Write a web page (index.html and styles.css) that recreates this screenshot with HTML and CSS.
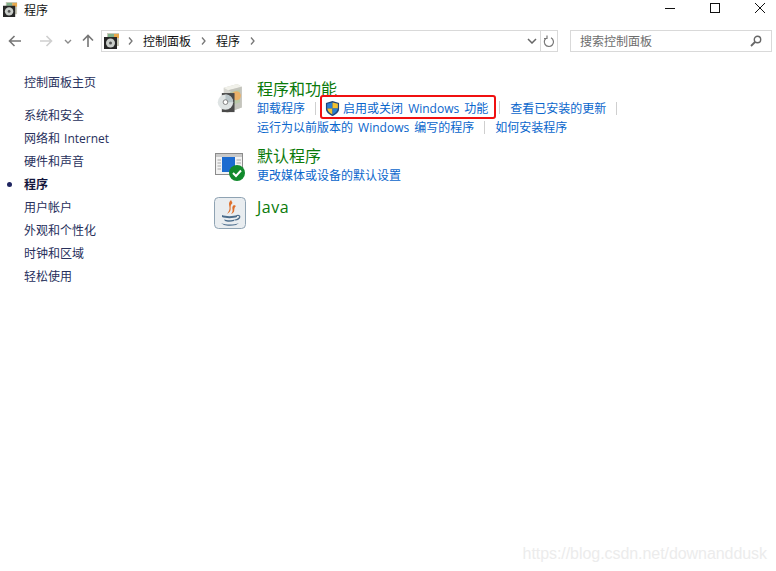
FILE: index.html
```html
<!DOCTYPE html>
<html lang="zh-CN">
<head>
    <meta charset="UTF-8">
    <title>程序</title>
    <link rel="stylesheet" href="styles.css">
</head>
<body>
    <svg class="icon-defs" width="0" height="0">
        <defs>
            <symbol id="disc-small" viewBox="0 0 16 16">
                <rect x="3" y="0" width="12" height="13" fill="#c8c8b8"/>
                <rect x="4" y="1" width="6" height="3" fill="#7fb08a"/>
                <rect x="10" y="1" width="5" height="4" fill="#e8a84c"/>
                <rect x="0" y="4" width="13" height="12" fill="#262626"/>
                <circle cx="6.500" cy="10" r="4.500" fill="#c9cdc9"/>
                <circle cx="6.500" cy="10" r="1.500" fill="#555"/>
            </symbol>
        </defs>
    </svg>

    <div class="titlebar">
        <div class="title">
            <svg class="title-icon"><use href="#disc-small"/></svg>
            <span>程序</span>
        </div>
        <div class="window-btns">
            <svg width="10" height="10" viewBox="0 0 10 10"><path d="M0 5.500H10" stroke="#111" fill="none"/></svg>
            <svg width="10" height="10" viewBox="0 0 10 10"><rect x="0.500" y="0.500" width="9" height="9" stroke="#111" fill="none"/></svg>
            <svg width="10" height="10" viewBox="0 0 10 10"><path d="M0 0L10 10M10 0L0 10" stroke="#111" fill="none"/></svg>
        </div>
    </div>

    <div class="navbar">
        <div class="nav-btns">
            <svg width="14" height="12" viewBox="0 0 14 12"><path d="M13 6H1.500M6.500 1L1.500 6L6.500 11" stroke="#767676" stroke-width="1.600" fill="none"/></svg>
            <svg class="nav-forward" width="14" height="12" viewBox="0 0 14 12"><path d="M1 6H12.500M7.500 1L12.500 6L7.500 11" stroke="#cfcfcf" stroke-width="1.600" fill="none"/></svg>
            <svg class="nav-drop" width="8" height="5" viewBox="0 0 8 5"><path d="M1 1L4 4L7 1" stroke="#8a8a8a" stroke-width="1.400" fill="none"/></svg>
            <svg class="nav-up" width="12" height="14" viewBox="0 0 12 14"><path d="M6 13V1.500M1 6.500L6 1.500L11 6.500" stroke="#767676" stroke-width="1.600" fill="none"/></svg>
        </div>
        <div class="address">
            <svg class="address-icon"><use href="#disc-small"/></svg>
            <svg class="crumb-arrow" width="5" height="8" viewBox="0 0 5 8"><path d="M1 0.500L4 4L1 7.500" stroke="#777" stroke-width="1.300" fill="none"/></svg>
            <span class="crumb">控制面板</span>
            <svg class="crumb-arrow" width="5" height="8" viewBox="0 0 5 8"><path d="M1 0.500L4 4L1 7.500" stroke="#777" stroke-width="1.300" fill="none"/></svg>
            <span class="crumb">程序</span>
            <svg class="crumb-arrow" width="5" height="8" viewBox="0 0 5 8"><path d="M1 0.500L4 4L1 7.500" stroke="#777" stroke-width="1.300" fill="none"/></svg>
            <svg class="address-drop" width="10" height="6" viewBox="0 0 10 6"><path d="M1 1L5 5L9 1" stroke="#666" stroke-width="1.500" fill="none"/></svg>
            <div class="refresh">
                <svg width="12" height="13" viewBox="0 0 12 13"><path d="M4.500 2.500A4.600 4.600 0 1 0 8 2.800M4 0.500V3.500H1" stroke="#777" stroke-width="1.200" fill="none"/></svg>
            </div>
        </div>
        <div class="search">
            <span>搜索控制面板</span>
            <svg width="12" height="12" viewBox="0 0 12 12"><circle cx="7.500" cy="4.500" r="3.200" stroke="#666" stroke-width="1.400" fill="none"/><path d="M5 7L1 11" stroke="#666" stroke-width="1.800"/></svg>
        </div>
    </div>

    <div class="main">
        <ul class="sidebar">
            <li class="side-home">控制面板主页</li>
            <li>系统和安全</li>
            <li>网络和 Internet</li>
            <li>硬件和声音</li>
            <li class="side-current">程序</li>
            <li>用户帐户</li>
            <li>外观和个性化</li>
            <li>时钟和区域</li>
            <li>轻松使用</li>
        </ul>

        <div class="content">
            <div class="category">
                <svg class="cat-icon icon-programs" viewBox="0 0 32 32">
                    <path d="M9 4L24 0L29 3V26L13 32L9 30Z" fill="#d6d6d0"/>
                    <path d="M9 4L24 0L29 3L14 7Z" fill="#f1f1ea"/>
                    <path d="M14 7L29 3V26L20 29V10Z" fill="#c4c4bc"/>
                    <path d="M16 9L27 6V20L16 24Z" fill="#b9c9a8"/>
                    <circle cx="23" cy="13" r="5" fill="#eab068"/>
                    <rect x="7" y="10" width="14" height="21" fill="#4a4a4a"/>
                    <circle cx="11" cy="20" r="8.500" fill="#dfe4e4"/>
                    <path d="M11 11.500A8.500 8.500 0 0 1 19.500 20H11Z" fill="#b8c4c8"/>
                    <circle cx="11" cy="20" r="2.600" fill="#fff" stroke="#777"/>
                </svg>
                <div class="cat-body">
                    <div class="cat-title">程序和功能</div>
                    <div class="link-row">
                        <a class="sep sep-tight">卸载程序</a>
                        <a class="feature-link">
                            <svg width="15" height="17" viewBox="0 0 16 17">
                                <path d="M8 0.500L15 2.500V9C15 12.500 11.500 15 8 16.500C4.500 15 1 12.500 1 9V2.500Z" fill="#20457a"/>
                                <path d="M8 2L8 8.500H2.300V3.300Z" fill="#2a7fd0"/>
                                <path d="M8 2L13.700 3.300V8.500H8Z" fill="#f2c230"/>
                                <path d="M8 8.500H2.400C2.700 11.500 5.500 13.800 8 15Z" fill="#f2c230"/>
                                <path d="M8 8.500H13.600C13.300 11.500 10.500 13.800 8 15Z" fill="#2a7fd0"/>
                            </svg>
                            <span>启用或关闭 Windows 功能</span>
                        </a>
                        <a class="sep">查看已安装的更新</a>
                    </div>
                    <div class="link-row">
                        <a class="sep">运行为以前版本的 Windows 编写的程序</a>
                        <a>如何安装程序</a>
                    </div>
                </div>
            </div>

            <div class="category cat-default">
                <svg class="cat-icon icon-default" viewBox="0 0 32 32">
                    <rect x="1.500" y="2.500" width="27" height="21" fill="#f2f2f2" stroke="#8b8b8b"/>
                    <rect x="2" y="3" width="26" height="3" fill="#c9c9c9"/>
                    <rect x="8" y="6" width="13" height="15" fill="#1c6bd0"/>
                    <path d="M3.500 9H7M3.500 12H7M3.500 15H7M3.500 18H7M22.500 9H27M22.500 12H27" stroke="#a8a8a8"/>
                    <circle cx="23" cy="22" r="8" fill="#118a2c"/>
                    <path d="M19 22L22 25L27 19.500" stroke="#fff" stroke-width="2" fill="none"/>
                </svg>
                <div class="cat-body">
                    <div class="cat-title">默认程序</div>
                    <div class="link-row"><a>更改媒体或设备的默认设置</a></div>
                </div>
            </div>

            <div class="category cat-java">
                <svg class="cat-icon" viewBox="0 0 32 32">
                    <rect x="0.500" y="0.500" width="31" height="31" rx="4" fill="#e9edf0" stroke="#8fa3b3"/>
                    <path d="M17 3C12 8 19 10 13 17C20 13 14 10 18.500 6ZM20 8C16 11 21 13 17 17C22.500 15 18.500 12 22 9Z" fill="#de6f2b"/>
                    <path d="M8 18C11 19.500 20 19.500 23 18V20C20 21.500 11 21.500 8 20ZM10 22.500C13 23.500 18 23.500 21 22.500L20 24C17 25 13 25 11 24ZM7 26C12 28 20 28 25 26L22 28C18 29 13 29 10 28Z" fill="#4c6d8c"/>
                    <path d="M23 18.500C27 17.500 27 22 21 23" stroke="#4c6d8c" stroke-width="1.200" fill="none"/>
                </svg>
                <div class="cat-body">
                    <div class="cat-title">Java</div>
                </div>
            </div>
        </div>
    </div>

    <div class="watermark">https://blog.csdn.net/downanddusk</div>
</body>
</html>
```

FILE: styles.css
```css
html, body {
    height: 100%;
}

body {
    margin: 0;
    background-color: #fff;
    color: #111;
    font-family: "Open Sans", "Noto Sans CJK SC", sans-serif;
    font-size: 12px;
    word-spacing: 2px;
    overflow: hidden;
}

.icon-defs {
    display: block;
}

.titlebar {
    display: flex;
    justify-content: space-between;
    align-items: center;
    height: 19px;
    padding-left: 3px;
}

.title {
    display: flex;
    align-items: center;
    gap: 6px;
}

.title-icon {
    width: 15px;
    height: 15px;
}

.window-btns {
    display: flex;
    gap: 35px;
    padding-right: 11px;
    margin-top: -3px;
}

.window-btns svg {
    display: block;
}

.navbar {
    display: flex;
    align-items: center;
    height: 22px;
    margin-top: 11px;
}

.nav-btns {
    display: flex;
    align-items: center;
    width: 101px;
    padding-left: 8px;
    box-sizing: border-box;
}

.nav-forward {
    margin-left: 17px;
}

.nav-drop {
    margin-left: 11px;
}

.nav-up {
    margin-left: 10px;
}

.address {
    display: flex;
    align-items: center;
    width: 457px;
    height: 22px;
    box-sizing: border-box;
    border: 1px solid #d9d9d9;
    padding-left: 2px;
}

.address-icon {
    width: 16px;
    height: 16px;
}

.crumb-arrow {
    margin: 0 10px 0 8px;
}

.crumb {
    margin-right: 2px;
}

.address-drop {
    margin-left: auto;
    margin-right: 3px;
}

.refresh {
    display: flex;
    align-items: center;
    justify-content: center;
    width: 16px;
    height: 100%;
    border-left: 1px solid #d9d9d9;
}

.search {
    display: flex;
    align-items: center;
    justify-content: space-between;
    width: 202px;
    height: 22px;
    box-sizing: border-box;
    margin-left: 12px;
    padding: 0 9px;
    border: 1px solid #d9d9d9;
    color: #6d6d6d;
}

.main {
    display: flex;
}

.sidebar {
    width: 214px;
    box-sizing: border-box;
    margin: 0;
    padding: 19px 0 0 24px;
    list-style: none;
    color: #27305c;
    word-spacing: 1px;
}

.sidebar li {
    height: 23px;
    line-height: 23px;
}

.sidebar .side-home {
    margin-bottom: 10px;
}

.sidebar .side-current {
    position: relative;
    font-weight: bold;
    color: #14163c;
}

.side-current::before {
    content: "";
    position: absolute;
    left: -17px;
    top: 9px;
    width: 5px;
    height: 5px;
    border-radius: 50%;
    background-color: #1f2560;
}

.content {
    flex: 1;
    padding-top: 27px;
}

.category {
    display: flex;
    gap: 11px;
}

.cat-icon {
    flex: none;
    width: 32px;
    height: 32px;
}

.icon-programs {
    margin-top: 5px;
    height: 29px;
}

.icon-default {
    margin-top: 5px;
}

.cat-title {
    height: 20px;
    line-height: 20px;
    font-size: 16px;
    color: #0a7a0a;
}

.link-row {
    display: flex;
    height: 19px;
    line-height: 19px;
    color: #0a66cc;
}

.link-row .sep {
    position: relative;
    padding-right: 11px;
    margin-right: 10px;
}

.link-row .sep-tight {
    margin-right: 4px;
}

.link-row .sep::after,
.feature-link::after {
    content: "";
    position: absolute;
    right: 0;
    top: 3px;
    height: 13px;
    border-right: 1px solid #cfcfcf;
}

.feature-link {
    position: relative;
    display: flex;
    align-items: center;
    gap: 3px;
    height: 24px;
    margin: -4px 14px -1px 0;
    padding: 3px 6px 0 3px;
    box-sizing: border-box;
    border: 2px solid #f01010;
    border-radius: 3px;
}

.feature-link::after {
    right: -6px;
    top: 4px;
}

.cat-default {
    margin-top: 9px;
}

.cat-java {
    margin-top: 12px;
}

.cat-java .cat-title {
    letter-spacing: 0.5px;
}

.watermark {
    position: absolute;
    right: 9px;
    bottom: 8px;
    font-family: "Liberation Sans", sans-serif;
    font-size: 16px;
    letter-spacing: -0.06px;
    word-spacing: 0;
    color: #ececec;
}
```
